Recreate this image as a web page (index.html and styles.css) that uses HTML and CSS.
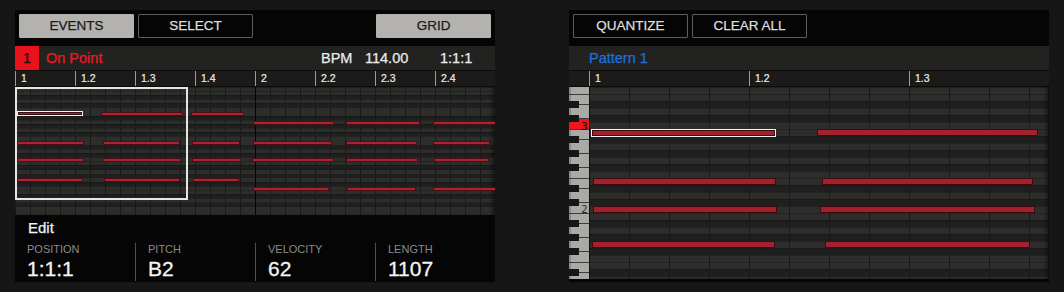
FILE: index.html
```html
<!DOCTYPE html>
<html>
<head>
<meta charset="utf-8">
<link rel="stylesheet" href="styles.css">
</head>
<body>
<div class="stage">
  <section class="panel">
    <div class="toolbar">
      <button class="btn btn-on">EVENTS</button>
      <button class="btn">SELECT</button>
      <span class="spacer"></span>
      <button class="btn btn-on">GRID</button>
    </div>
    <div class="info">
      <span class="num">1</span>
      <span class="name">On Point</span>
      <span class="bpm-l">BPM</span>
      <span class="bpm">114.00</span>
      <span class="pos">1:1:1</span>
    </div>
    <div class="ruler ruler-left">
      <span class="tick">1</span><span class="tick">1.2</span><span class="tick">1.3</span><span class="tick">1.4</span>
      <span class="tick">2</span><span class="tick">2.2</span><span class="tick">2.3</span><span class="tick">2.4</span>
    </div>
    <div class="grid grid-left">
      <i class="note sel" style="left:2px;top:24px;width:66px"></i>
      <i class="note" style="left:86px;top:25px;width:82px"></i>
      <i class="note" style="left:176px;top:25px;width:53px"></i>
      <i class="note" style="left:238px;top:34px;width:81px"></i>
      <i class="note" style="left:331px;top:34px;width:74px"></i>
      <i class="note" style="left:418px;top:34px;width:70px"></i>
      <i class="note" style="left:2px;top:54px;width:67px"></i>
      <i class="note" style="left:88px;top:54px;width:77px"></i>
      <i class="note" style="left:177px;top:54px;width:48px"></i>
      <i class="note" style="left:238px;top:54px;width:79px"></i>
      <i class="note" style="left:331px;top:54px;width:71px"></i>
      <i class="note" style="left:418px;top:54px;width:57px"></i>
      <i class="note" style="left:2px;top:71px;width:67px"></i>
      <i class="note" style="left:87px;top:71px;width:79px"></i>
      <i class="note" style="left:177px;top:71px;width:49px"></i>
      <i class="note" style="left:237px;top:71px;width:82px"></i>
      <i class="note" style="left:331px;top:71px;width:72px"></i>
      <i class="note" style="left:419px;top:71px;width:55px"></i>
      <i class="note" style="left:2px;top:91px;width:66px"></i>
      <i class="note" style="left:89px;top:91px;width:76px"></i>
      <i class="note" style="left:178px;top:91px;width:46px"></i>
      <i class="note" style="left:238px;top:100px;width:76px"></i>
      <i class="note" style="left:332px;top:100px;width:69px"></i>
      <i class="note" style="left:418px;top:100px;width:70px"></i>
      <div class="selbox"></div>
    </div>
    <div class="edit">
      <div class="edit-title">Edit</div>
      <div class="fields">
        <div class="field"><div class="f-label">POSITION</div><div class="f-value">1:1:1</div></div>
        <div class="field"><div class="f-label">PITCH</div><div class="f-value">B2</div></div>
        <div class="field"><div class="f-label">VELOCITY</div><div class="f-value">62</div></div>
        <div class="field"><div class="f-label">LENGTH</div><div class="f-value">1107</div></div>
      </div>
    </div>
  </section>

  <section class="panel">
    <div class="toolbar">
      <button class="btn">QUANTIZE</button>
      <button class="btn">CLEAR ALL</button>
    </div>
    <div class="info info-right">
      <span class="pattern">Pattern 1</span>
    </div>
    <div class="ruler ruler-right">
      <span class="ruler-pad"></span>
      <span class="tick tick-wide">1</span><span class="tick tick-wide">1.2</span><span class="tick tick-wide">1.3</span>
    </div>
    <div class="roll">
      <svg class="keys" width="20" height="192" viewBox="0 0 20 192">
        <rect x="0" y="0" width="20" height="192" fill="#a9a9a5"/>
        <rect x="0" y="0" width="2" height="192" fill="#8a8a87"/>
        <path d="M10 31.5 H20 V42 H0 V35 H10 Z" fill="#f0141c"/>
        <g fill="#3c3c3c">
          <rect x="0" y="7" width="20" height="1"/>
          <rect x="10" y="17" width="10" height="1"/>
          <rect x="10" y="31" width="10" height="1"/>
          <rect x="0" y="42" width="20" height="1"/>
          <rect x="10" y="52" width="10" height="1"/>
          <rect x="10" y="66" width="10" height="1"/>
          <rect x="10" y="80" width="10" height="1"/>
          <rect x="0" y="91" width="20" height="1"/>
          <rect x="10" y="101" width="10" height="1"/>
          <rect x="10" y="115" width="10" height="1"/>
          <rect x="0" y="126" width="20" height="1"/>
          <rect x="10" y="136" width="10" height="1"/>
          <rect x="10" y="150" width="10" height="1"/>
          <rect x="10" y="164" width="10" height="1"/>
          <rect x="0" y="175" width="20" height="1"/>
          <rect x="10" y="185" width="10" height="1"/>
        </g>
        <g fill="#161616">
          <rect x="0" y="14" width="10" height="7"/>
          <rect x="0" y="28" width="10" height="7"/>
          <rect x="0" y="49" width="10" height="7"/>
          <rect x="0" y="63" width="10" height="7"/>
          <rect x="0" y="77" width="10" height="7"/>
          <rect x="0" y="98" width="10" height="7"/>
          <rect x="0" y="112" width="10" height="7"/>
          <rect x="0" y="133" width="10" height="7"/>
          <rect x="0" y="147" width="10" height="7"/>
          <rect x="0" y="161" width="10" height="7"/>
          <rect x="0" y="182" width="10" height="7"/>
        </g>
        <text x="18.5" y="42.5" class="key-label key-label-on">3</text>
        <text x="18.5" y="125.5" class="key-label">2</text>
      </svg>
      <div class="grid grid-right">
        <i class="note big sel" style="left:1px;top:42px;width:185px"></i>
        <i class="note big" style="left:227px;top:42px;width:221px"></i>
        <i class="note big" style="left:3px;top:91px;width:183px"></i>
        <i class="note big" style="left:232px;top:91px;width:211px"></i>
        <i class="note big" style="left:3px;top:119px;width:184px"></i>
        <i class="note big" style="left:230px;top:119px;width:215px"></i>
        <i class="note big" style="left:2px;top:154px;width:183px"></i>
        <i class="note big" style="left:235px;top:154px;width:205px"></i>
      </div>
    </div>
    <div class="roll-foot"></div>
  </section>
</div>
</body>
</html>
```
FILE: styles.css
```css
* { box-sizing: border-box; }
html, body { margin: 0; padding: 0; }
body {
  background: #161616;
  font-family: "Liberation Sans", Arial, sans-serif;
  width: 1064px;
  height: 292px;
  overflow: hidden;
}
.stage {
  display: flex;
  gap: 74px;
  padding: 10px 15px;
}
.panel {
  width: 480px;
  height: 272px;
  background: #050505;
  display: flex;
  flex-direction: column;
  overflow: hidden;
}
.toolbar {
  display: flex;
  gap: 4px;
  padding: 4px 4px 8px 4px;
  height: 36px;
}
.spacer { flex: 1; }
.btn {
  width: 115px;
  height: 24px;
  margin: 0;
  padding: 0;
  font-family: "Liberation Sans", Arial, sans-serif;
  font-size: 13.5px;
  color: #dedede;
  background: #050505;
  border: 1px solid #5e5e5e;
  border-radius: 1px;
  line-height: 22px;
  -webkit-text-stroke: 0.25px currentColor;
}
.btn-on {
  background: #b3b2ae;
  border-color: #b3b2ae;
  color: #1b1b1b;
}
.info {
  height: 24px;
  background: #222221;
  display: flex;
  align-items: center;
  font-size: 14.5px;
  color: #ececec;
  -webkit-text-stroke: 0.25px currentColor;
}
.num {
  width: 24px;
  height: 24px;
  background: #e8121b;
  color: #111;
  font-size: 14px;
  text-align: center;
  line-height: 24px;
}
.name {
  flex: 1;
  margin-left: 7px;
  color: #ee1a22;
}
.bpm-l { width: 44px; }
.bpm { width: 75px; }
.pos { width: 55px; }
.info-right { padding-left: 20px; }
.pattern { color: #1f70da; }

.ruler {
  height: 16px;
  border-top: 1px solid #0c0c0c;
  background: #1c1b19;
  display: flex;
  overflow: hidden;
  white-space: nowrap;
}
.tick {
  flex: none;
  width: 60px;
  height: 15px;
  border-left: 1px solid #9c9c9c;
  padding-left: 5px;
  font-size: 10.5px;
  line-height: 15px;
  color: #ececec;
  -webkit-text-stroke: 0.2px currentColor;
}
.tick-wide { width: 160px; }
.ruler-pad { flex: none; width: 20px; }

.grid {
  position: relative;
  overflow: hidden;
  border-top: 1px solid #0a0a0a;
}
.grid-left {
  height: 129px;
  box-shadow: inset -4px 0 4px -2px rgba(0,0,0,.6);
  background:
    linear-gradient(#050505, #050505) 240px 0 / 1px 100% no-repeat,
    repeating-linear-gradient(to right, #1a1a1a 0 1px, transparent 1px 15px),
    repeating-linear-gradient(to bottom, rgba(0,0,0,.22) 0 0.7px, transparent 0.7px 4.125px),
    repeating-linear-gradient(to bottom,
      #2d2d2c 0 8.25px, #1f1f1f 8.25px 12.375px, #2d2d2c 12.375px 16.5px,
      #1f1f1f 16.5px 20.625px, #2d2d2c 20.625px 28.875px, #1f1f1f 28.875px 33px,
      #2d2d2c 33px 37.125px, #1f1f1f 37.125px 41.25px, #2d2d2c 41.25px 45.375px,
      #1f1f1f 45.375px 49.5px);
}
.roll {
  display: flex;
  height: 193px;
  border-top: 1px solid #0a0a0a;
}
.keys { display: block; flex: none; }
.key-label {
  font-family: "DejaVu Sans Mono", monospace;
  font-size: 10.5px;
  text-anchor: end;
  fill: #2a2a2a;
}
.key-label-on { fill: #1a0000; }
.grid-right {
  flex: 1;
  height: 192px;
  border-top: 0;
  border-left: 1px solid #101010;
  box-shadow: inset -4px 0 4px -2px rgba(0,0,0,.6);
  background:
    repeating-linear-gradient(to right, #1a1a1a 0 1px, transparent 1px 40px),
    repeating-linear-gradient(to bottom, rgba(0,0,0,.22) 0 1px, transparent 1px 7px),
    repeating-linear-gradient(to bottom,
      #2d2d2c 0 14px, #1f1f1f 14px 21px, #2d2d2c 21px 28px,
      #1f1f1f 28px 35px, #2d2d2c 35px 49px, #1f1f1f 49px 56px,
      #2d2d2c 56px 63px, #1f1f1f 63px 70px, #2d2d2c 70px 77px,
      #1f1f1f 77px 84px);
  background-position: -1px 0, 0 0, 0 0;
}
.roll-foot { height: 3px; background: #050505; }

.note {
  position: absolute;
  display: block;
  height: 4px;
  background: #ab2230;
  border: 1px solid #4a0e14;
}
.note.big {
  height: 7px;
  background: #a4202c;
  border-color: #3c0b10;
}
.note.sel {
  height: 5px;
  border: 1px solid #f2f2f2;
  box-shadow: inset 0 0 0 1px #3a0b10;
}
.note.big.sel {
  height: 8px;
  border-color: #f2f2f2;
}
.selbox {
  position: absolute;
  left: 0;
  top: 0;
  width: 173px;
  height: 113px;
  border: 2px solid #e6e6e6;
}

.edit {
  height: 67px;
  background: #050505;
  padding-top: 4px;
}
.edit-title {
  padding-left: 13px;
  height: 18px;
  line-height: 18px;
  font-size: 15px;
  color: #f2f2f2;
  -webkit-text-stroke: 0.25px currentColor;
}
.fields {
  display: flex;
  margin-top: 6px;
  height: 38px;
}
.field {
  width: 120px;
  padding-left: 12px;
  border-left: 1px solid #505050;
}
.field:first-child { border-left: 0; }
.f-label {
  font-size: 11px;
  line-height: 12px;
  color: #8b8b8b;
}
.f-value {
  margin-top: 2px;
  font-size: 21px;
  line-height: 24px;
  color: #f4f4f4;
  -webkit-text-stroke: 0.3px currentColor;
}
```
